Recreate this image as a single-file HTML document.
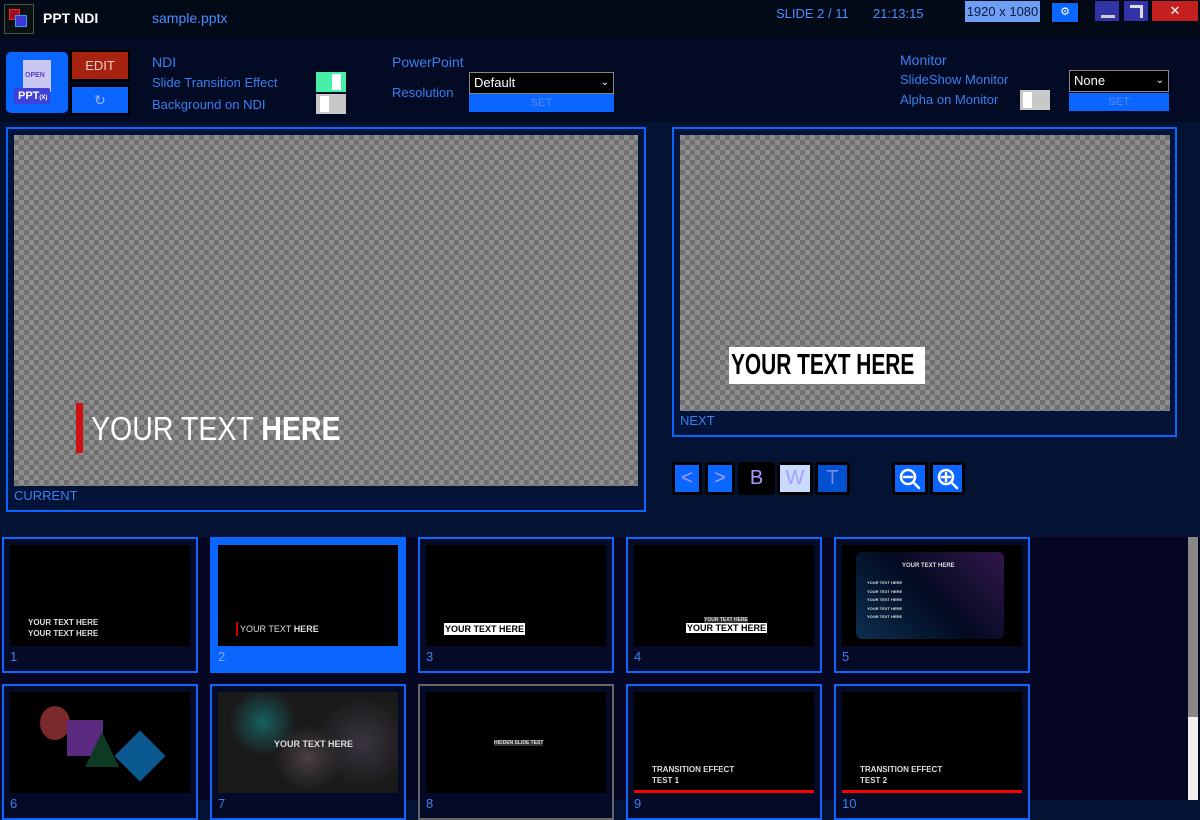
<!DOCTYPE html>
<html><head><meta charset="utf-8"><style>
*{margin:0;padding:0;box-sizing:border-box}
body{width:1200px;height:800px;overflow:hidden;background:#041233;font-family:"Liberation Sans","DejaVu Sans",sans-serif;position:relative;color:#3d86ff}
.a{position:absolute}
.t{font-size:13px;color:#3b7ff0;white-space:nowrap}
.chk{background-color:#8d8d8d;background-image:linear-gradient(45deg,#6f6f6f 25%,transparent 25%,transparent 75%,#6f6f6f 75%),linear-gradient(45deg,#6f6f6f 25%,transparent 25%,transparent 75%,#6f6f6f 75%);background-size:10px 10px;background-position:0 0,5px 5px}
.btn{position:absolute;top:462px;width:30px;height:33px;border:3px solid #000;background:#0a66ff;color:#a89cff;font-size:20px;text-align:center;line-height:27px;border-radius:3px}
.th{position:absolute;width:196px;height:136px;border:2px solid #0a66ff;background:#050a26}
.th .in{position:absolute;left:6px;top:6px;width:180px;height:101px;background:#000;overflow:hidden}
.th .n{position:absolute;left:6px;top:110px;font-size:13px;color:#3b7ff0}
.wt{color:#ddd;font-weight:bold;font-size:8px;position:absolute;white-space:nowrap}
</style></head><body>
<div class="a" style="left:0;top:0;width:1200px;height:38px;background:#020a18"></div>
<div class="a" style="left:4px;top:4px;width:30px;height:30px;background:#0d1010;border:1px solid #3a5a4a"></div>
<div class="a" style="left:9px;top:9px;width:11px;height:11px;background:#a0101a;border:1px solid #ff2030"></div>
<div class="a" style="left:15px;top:15px;width:12px;height:12px;background:#3a3ad0;border:1px solid #20a0ff"></div>
<div class="a" style="left:43px;top:10px;font-size:14px;color:#fff;font-weight:bold">PPT NDI</div>
<div class="a t" style="left:152px;top:10px;font-size:14px;color:#4c8cff">sample.pptx</div>
<div class="a t" style="left:776px;top:6px;font-size:13px;color:#4c8cff">SLIDE 2 / 11</div>
<div class="a t" style="left:873px;top:6px;font-size:13px;color:#4c8cff">21:13:15</div>
<div class="a" style="left:965px;top:1px;width:75px;height:21px;background:#6f9ff4;color:#0a1a40;font-size:13px;text-align:center;line-height:21px">1920 x 1080</div>
<div class="a" style="left:1050px;top:1px;width:30px;height:23px;background:#0a66ff;border:2px solid #000;color:#fff;font-size:11px;text-align:center;line-height:19px">⚙</div>
<div class="a" style="left:1095px;top:1px;width:24px;height:20px;background:#3333a8"></div>
<div class="a" style="left:1101px;top:15px;width:14px;height:3px;background:#ccc"></div>
<div class="a" style="left:1124px;top:1px;width:24px;height:20px;background:#3333a8"></div>
<div class="a" style="left:1130px;top:5px;width:13px;height:3px;background:#ddd"></div>
<div class="a" style="left:1140px;top:5px;width:3px;height:13px;background:#ddd"></div>
<div class="a" style="left:1152px;top:1px;width:46px;height:20px;background:#c42020;color:#fff;text-align:center;font-size:13px;line-height:20px">✕</div>
<div class="a" style="left:0;top:38px;width:1200px;height:84px;background:#020a24"></div>
<div class="a" style="left:6px;top:52px;width:62px;height:61px;background:#0a66ff;border-radius:5px"></div>
<div class="a" style="left:23px;top:60px;width:28px;height:32px;background:#c8c8f0"></div>
<div class="a" style="left:25px;top:72px;font-size:7px;color:#6040d0;font-weight:bold">OPEN</div>
<div class="a" style="left:14px;top:88px;width:36px;height:16px;background:#4040d8;border-radius:2px;color:#fff;font-size:11px;font-weight:bold;line-height:16px;padding-left:4px">PPT<span style="font-size:6px">(X)</span></div>
<div class="a" style="left:70px;top:50px;width:60px;height:31px;border:2px solid #000;background:#a82210;color:#f0d0d0;font-size:13px;text-align:center;line-height:27px">EDIT</div>
<div class="a" style="left:70px;top:85px;width:60px;height:30px;border:2px solid #000;background:#0a66ff;color:#aab0ff;font-size:14px;text-align:center;line-height:26px">↻</div>
<div class="a t" style="left:152px;top:54px;font-size:14px">NDI</div>
<div class="a t" style="left:152px;top:75px">Slide Transition Effect</div>
<div class="a t" style="left:152px;top:97px">Background on NDI</div>
<div class="a" style="left:316px;top:72px;width:30px;height:20px;background:#46f0a8"></div>
<div class="a" style="left:332px;top:74px;width:9px;height:16px;background:#fff"></div>
<div class="a" style="left:316px;top:94px;width:30px;height:20px;background:#c8c8c8"></div>
<div class="a" style="left:320px;top:96px;width:9px;height:16px;background:#fff"></div>
<div class="a t" style="left:392px;top:54px;font-size:14px">PowerPoint</div>
<div class="a t" style="left:392px;top:85px">Resolution</div>
<div class="a" style="left:469px;top:72px;width:145px;height:22px;background:#000;border:1px solid #888;color:#fff;font-size:13px;line-height:20px;padding-left:4px">Default<span style="position:absolute;right:4px;font-size:10px">⌄</span></div>
<div class="a" style="left:469px;top:94px;width:145px;height:18px;background:#0a66ff;color:#5a8ae8;font-size:11px;text-align:center;line-height:18px">SET</div>
<div class="a t" style="left:900px;top:52px;font-size:14px">Monitor</div>
<div class="a t" style="left:900px;top:72px">SlideShow Monitor</div>
<div class="a t" style="left:900px;top:92px">Alpha on Monitor</div>
<div class="a" style="left:1020px;top:90px;width:30px;height:20px;background:#c8c8c8"></div>
<div class="a" style="left:1023px;top:92px;width:9px;height:16px;background:#fff"></div>
<div class="a" style="left:1069px;top:70px;width:100px;height:22px;background:#000;border:1px solid #888;color:#fff;font-size:13px;line-height:20px;padding-left:4px">None<span style="position:absolute;right:4px;font-size:10px">⌄</span></div>
<div class="a" style="left:1069px;top:93px;width:100px;height:18px;background:#0a66ff;color:#5a8ae8;font-size:11px;text-align:center;line-height:18px">SET</div>
<div class="a" style="left:6px;top:127px;width:640px;height:385px;border:2px solid #0a66ff;background:#041438"></div>
<div class="a chk" style="left:14px;top:135px;width:624px;height:351px"></div>
<div class="a" style="left:76px;top:403px;width:7px;height:50px;background:#d01010"></div>
<div class="a" style="left:91px;top:410px;font-size:33px;color:#fff;white-space:nowrap;transform:scaleX(0.865);transform-origin:0 0">YOUR TEXT <b>HERE</b></div>
<div class="a t" style="left:14px;top:488px">CURRENT</div>
<div class="a" style="left:672px;top:127px;width:505px;height:310px;border:2px solid #0a66ff;background:#041438"></div>
<div class="a chk" style="left:680px;top:135px;width:490px;height:276px"></div>
<div class="a" style="left:729px;top:347px;width:196px;height:37px;background:#fff"></div>
<div class="a" style="left:731px;top:347px;color:#000;font-weight:bold;font-size:29px;line-height:37px;white-space:nowrap;transform:scaleX(0.72);transform-origin:0 0">YOUR TEXT HERE</div>
<div class="a t" style="left:680px;top:413px">NEXT</div>
<div class="btn" style="left:672px">&lt;</div>
<div class="btn" style="left:705px">&gt;</div>
<div class="btn" style="left:738px;width:37px;background:#000">B</div>
<div class="btn" style="left:777px;width:36px;background:#c8dcff">W</div>
<div class="btn" style="left:815px;width:35px;background:#0050d0;color:#7a86e0">T</div>
<div class="btn" style="left:892px;width:36px"><svg width="26" height="26" viewBox="0 0 26 26" style="margin-top:1px"><circle cx="11" cy="11" r="7" fill="none" stroke="#fff" stroke-width="2.5"/><path d="M7 11h8M16 16l6 6" stroke="#fff" stroke-width="2.5" stroke-linecap="round"/></svg></div>
<div class="btn" style="left:930px;width:35px"><svg width="26" height="26" viewBox="0 0 26 26" style="margin-top:1px"><circle cx="11" cy="11" r="7" fill="none" stroke="#fff" stroke-width="2.5"/><path d="M7 11h8M11 7v8M16 16l6 6" stroke="#fff" stroke-width="2.5" stroke-linecap="round"/></svg></div>
<div class="a" style="left:0;top:537px;width:1200px;height:263px;background:#050622"></div>
<div class="a" style="left:1188px;top:537px;width:10px;height:263px;background:#f0f0f0"></div>
<div class="a" style="left:1188px;top:537px;width:10px;height:180px;background:#888"></div>
<div class="th" style="left:2px;top:537px"><div class="in"><div class="wt" style="left:18px;top:72px;line-height:11px">YOUR TEXT HERE<br>YOUR TEXT HERE</div></div><div class="n">1</div></div>
<div class="th" style="left:210px;top:537px;background:#0a66ff;border-color:#0a66ff"><div class="in"><div class="a" style="left:18px;top:77px;width:2px;height:14px;background:#c00"></div><div class="wt" style="left:22px;top:79px;font-weight:normal;font-size:9px">YOUR TEXT <b>HERE</b></div></div><div class="n" style="color:#7aa8ff">2</div></div>
<div class="th" style="left:418px;top:537px"><div class="in"><div class="wt" style="left:18px;top:78px;background:#fff;color:#000;font-size:9px;padding:1px 1px">YOUR TEXT HERE</div></div><div class="n">3</div></div>
<div class="th" style="left:626px;top:537px"><div class="in"><div class="wt" style="left:70px;top:72px;font-size:5px;background:#333">YOUR TEXT HERE</div><div class="wt" style="left:52px;top:78px;background:#fff;color:#000;font-size:9px;padding:0 1px">YOUR TEXT HERE</div></div><div class="n">4</div></div>
<div class="th" style="left:834px;top:537px"><div class="in"><div class="a" style="left:14px;top:7px;width:148px;height:87px;border-radius:6px;background:linear-gradient(225deg,#32164a,#020a20 50%,#0c3050)"></div><div class="wt" style="left:60px;top:18px;font-size:6px">YOUR TEXT HERE</div><div class="wt" style="left:25px;top:34px;font-size:4px;line-height:8.5px">YOUR TEXT HERE<br>YOUR TEXT HERE<br>YOUR TEXT HERE<br>YOUR TEXT HERE<br>YOUR TEXT HERE</div></div><div class="n">5</div></div>
<div class="th" style="left:2px;top:684px"><div class="in"><div class="a" style="left:30px;top:14px;width:30px;height:34px;border-radius:50%;background:#7a2a2a"></div><div class="a" style="left:57px;top:28px;width:36px;height:36px;background:#5a2a80"></div><div class="a" style="left:75px;top:40px;width:0;height:0;border-left:17px solid transparent;border-right:17px solid transparent;border-bottom:35px solid #0e3a24"></div><div class="a" style="left:112px;top:46px;width:36px;height:36px;background:#0a5a90;transform:rotate(45deg)"></div></div><div class="n">6</div></div>
<div class="th" style="left:210px;top:684px"><div class="in" style="background:radial-gradient(circle at 25% 30%,#186060 0,transparent 22%),radial-gradient(circle at 50% 65%,#4a4040 0,transparent 30%),radial-gradient(circle at 80% 50%,#3a3440,transparent 30%),#1a1a1a"><div class="wt" style="left:56px;top:47px;font-size:9px">YOUR TEXT HERE</div></div><div class="n">7</div></div>
<div class="th" style="left:418px;top:684px;border-color:#666"><div class="in"><div class="wt" style="left:68px;top:48px;font-size:5px;background:#333">HIDDEN SLIDE TEST</div></div><div class="n">8</div></div>
<div class="th" style="left:626px;top:684px"><div class="in"><div class="wt" style="left:18px;top:72px;line-height:11px">TRANSITION EFFECT<br>TEST 1</div><div class="a" style="left:0;top:98px;width:180px;height:3px;background:#f00"></div></div><div class="n">9</div></div>
<div class="th" style="left:834px;top:684px"><div class="in"><div class="wt" style="left:18px;top:72px;line-height:11px">TRANSITION EFFECT<br>TEST 2</div><div class="a" style="left:0;top:98px;width:180px;height:3px;background:#f00"></div></div><div class="n">10</div></div>
</body></html>
